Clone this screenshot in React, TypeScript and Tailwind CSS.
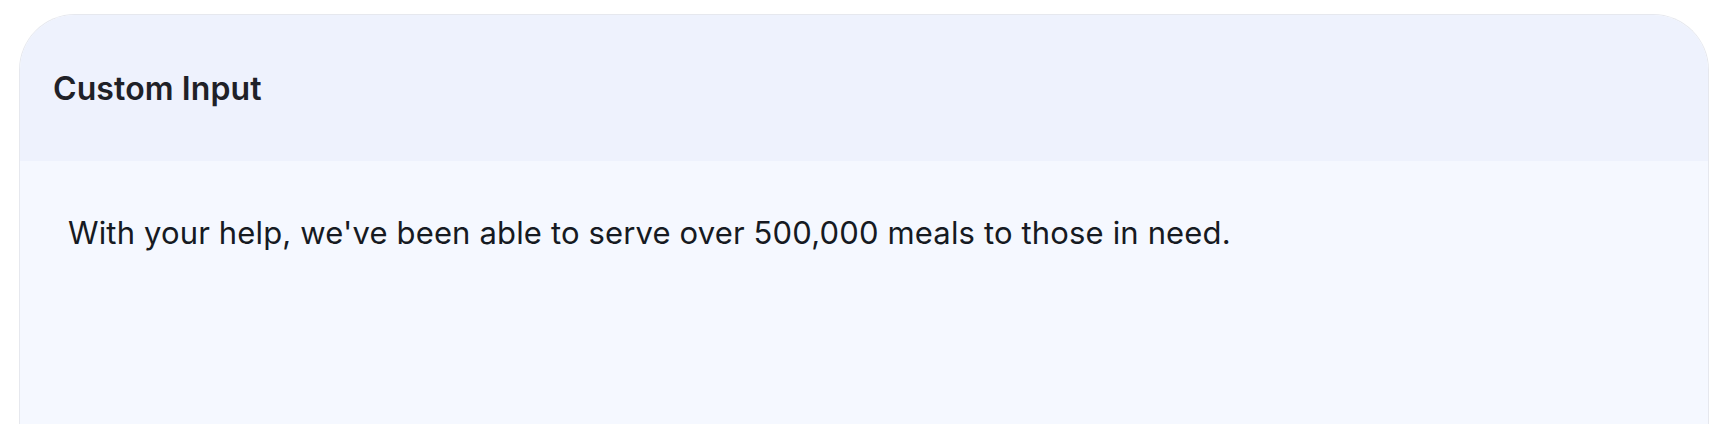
import React from 'react';

export default function App() {
  return (
    <div className="min-h-screen bg-white px-[19px] pt-[14px]" style={{ fontFamily: 'Inter, "Noto Sans", sans-serif' }}>
      <div className="overflow-hidden rounded-t-[56px] border border-b-0 border-[#e6e8ee] h-[420px] flex flex-col">
        {/* header */}
        <div className="h-[146px] bg-[#eef2fd] flex items-center px-[33px] pt-[2px]">
          <h2 className="text-[32px] font-semibold text-[#1f2127] tracking-[0.1px]">Custom Input</h2>
        </div>
        {/* body */}
        <div className="flex-1 bg-[#f5f8ff] px-[48px] pt-[49px]">
          <p className="text-[31px] text-[#161a22] leading-[1.5] tracking-[0.15px]">
            With your help, we've been able to serve over 500,000 meals to those in need.
          </p>
        </div>
      </div>
    </div>
  );
}
